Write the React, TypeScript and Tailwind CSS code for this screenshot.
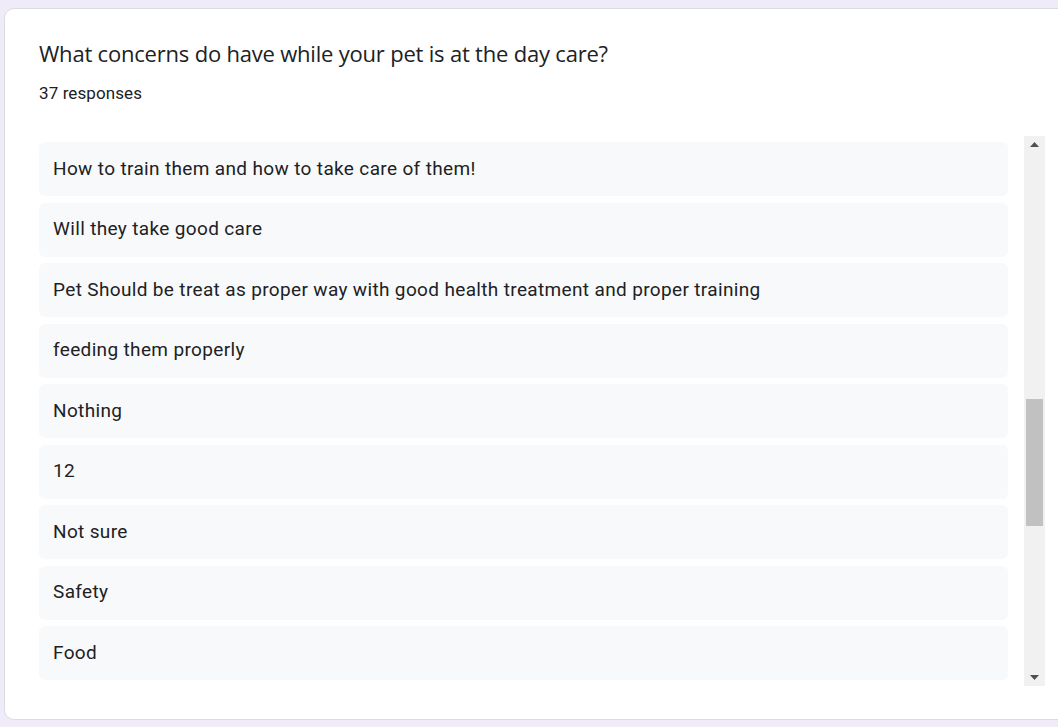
const answers = [
  "How to train them and how to take care of them!",
  "Will they take good care",
  "Pet Should be treat as proper way with good health treatment and proper training",
  "feeding them properly",
  "Nothing",
  "12",
  "Not sure",
  "Safety",
  "Food",
];

function ScrollBar() {
  return (
    <div className="flex h-full w-[21px] flex-col bg-[#f1f1f1]">
      <div className="flex h-[17px] items-center justify-center">
        <svg width="9" height="5" viewBox="0 0 9 5">
          <path d="M4.5 0 L9 5 L0 5 Z" fill="#505050" />
        </svg>
      </div>
      <div className="flex flex-1 flex-col px-[2px]">
        <div className="h-[246px]" />
        <div className="h-[127px] bg-[#c1c1c1]" />
      </div>
      <div className="flex h-[17px] items-center justify-center">
        <svg width="9" height="5" viewBox="0 0 9 5">
          <path d="M0 0 L9 0 L4.5 5 Z" fill="#505050" />
        </svg>
      </div>
    </div>
  );
}

export default function App() {
  return (
    <div className="h-[727px] w-[1058px] overflow-hidden bg-[#f0ebf8] pl-[4px] pt-[8px]">
      <div className="flex h-[712px] w-[1070px] flex-col rounded-[10px] border border-[#dadce0] bg-white text-[#202124]">
        <div className="pl-[34px] pt-[30px]">
          <h2 className="font-['Open_Sans',sans-serif] text-[22px] leading-[28px] tracking-[-0.2px]">
            What concerns do have while your pet is at the day care?
          </h2>
          <p className="mt-[16px] font-['Roboto',sans-serif] text-[17px] leading-[20px] tracking-[0.1px]">
            37 responses
          </p>
        </div>

        <div className="mt-[33px] flex h-[550px] pl-[34px]">
          <div className="flex w-[969px] flex-col gap-[6.5px] py-[6px]">
            {answers.map((a) => (
              <div
                key={a}
                className="flex h-[54px] items-center rounded-[6px] bg-[#f8f9fa] px-[14px] font-['Roboto',sans-serif] text-[19px] tracking-[0.35px]"
              >
                {a}
              </div>
            ))}
          </div>
          <div className="ml-[16px]">
            <ScrollBar />
          </div>
        </div>
      </div>
    </div>
  );
}
